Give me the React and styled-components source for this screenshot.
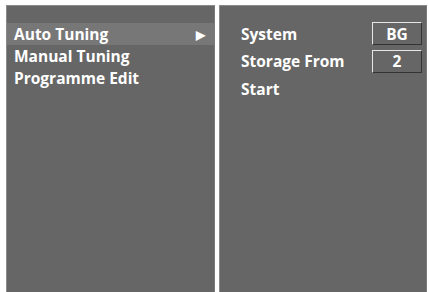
import React from 'react';
import styled, { createGlobalStyle } from 'styled-components';

const GlobalStyle = createGlobalStyle`
  html, body {
    margin: 0;
    padding: 0;
    background: #ffffff;
  }
`;

const Screen = styled.div`
  display: grid;
  grid-template-columns: 209px 208px;
  column-gap: 4px;
  width: 429px;
  height: 292px;
  box-sizing: border-box;
  padding: 5px 2px 0 6px;
  font-family: "Open Sans", "Noto Sans", sans-serif;
  font-weight: 700;
  color: #ffffff;
`;

const Panel = styled.div`
  background: #666666;
  border-left: 1px solid #8a8a8a;
  border-top: 1px solid #8a8a8a;
  border-right: 1px solid #7a7a7a;
  box-sizing: border-box;
  padding-top: ${p => p.$top}px;
`;

const MenuItem = styled.div`
  display: flex;
  align-items: center;
  justify-content: space-between;
  height: 22px;
  padding: 0 9px 0 7px;
  font-size: 15.5px;
  background: ${p => (p.$active ? '#777777' : 'transparent')};
`;

const Arrow = styled.span`
  font-size: 12px;
`;

const SettingRow = styled.div`
  display: flex;
  align-items: center;
  justify-content: space-between;
  height: 27.5px;
  padding: 0 4px 0 21px;
  font-size: 15.5px;
`;

const ValueBox = styled.div`
  width: 50px;
  height: 23px;
  box-sizing: border-box;
  display: flex;
  align-items: center;
  justify-content: center;
  border-top: 1px solid #e6e6e6;
  border-left: 1px solid #e6e6e6;
  border-right: 1px solid #333333;
  border-bottom: 1px solid #333333;
  font-size: 15.5px;
`;

const menu = ['Auto Tuning', 'Manual Tuning', 'Programme Edit'];
const settings = [
  { label: 'System', value: 'BG' },
  { label: 'Storage From', value: '2' },
  { label: 'Start' },
];

export default function App() {
  return (
    <>
      <GlobalStyle />
      <Screen>
        <Panel $top={17}>
          {menu.map((m, i) => (
            <MenuItem key={m} $active={i === 0}>
              <span>{m}</span>
              {i === 0 && <Arrow>▶</Arrow>}
            </MenuItem>
          ))}
        </Panel>
        <Panel $top={14}>
          {settings.map(s => (
            <SettingRow key={s.label}>
              <span>{s.label}</span>
              {s.value && <ValueBox>{s.value}</ValueBox>}
            </SettingRow>
          ))}
        </Panel>
      </Screen>
    </>
  );
}
